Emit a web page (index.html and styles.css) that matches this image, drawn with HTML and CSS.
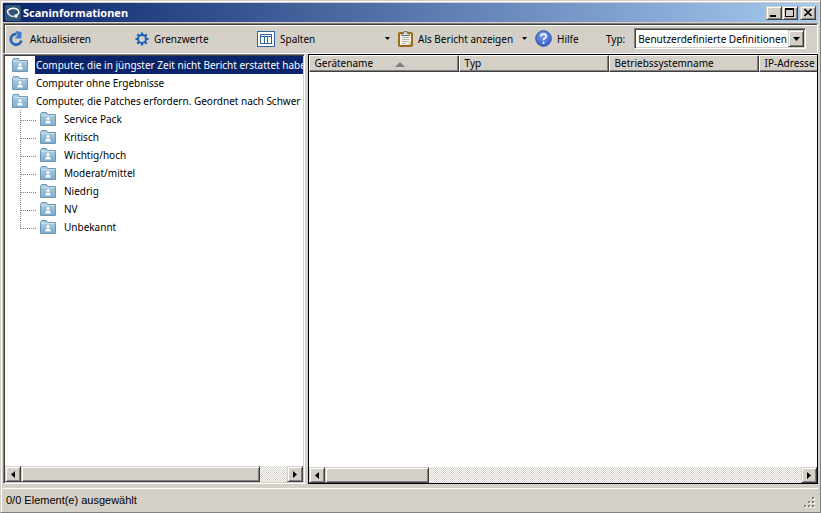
FILE: index.html
```
<!DOCTYPE html>
<html lang="de">
<head>
    <meta charset="UTF-8">
    <meta name="viewport" content="width=device-width, initial-scale=1.0">
    <title>Scaninformationen</title>
    <link rel="stylesheet" href="styles.css">
</head>
<body>
    <svg class="defs" width="0" height="0" aria-hidden="true">
        <defs>
            <linearGradient id="folderFill" x1="0" y1="0" x2="0" y2="1">
                <stop offset="0" stop-color="#b4d2e4"/>
                <stop offset="1" stop-color="#7dabca"/>
            </linearGradient>
            <radialGradient id="helpFill" cx="0.45" cy="0.3" r="0.75">
                <stop offset="0" stop-color="#7ea0ee"/>
                <stop offset="1" stop-color="#2f56c0"/>
            </radialGradient>
            <symbol id="folder" viewBox="0 0 16 14">
                <path d="M0.5 13.5V2.5L1.5 0.5H6.5L7.5 2.5H15.5V13.5Z" fill="url(#folderFill)" stroke="#6b98b5"/>
                <path d="M1 3.5H15" stroke="#c9e0ee"/>
                <circle cx="8" cy="6.5" r="1.6" fill="#fff"/>
                <path d="M5.5 11.5V10Q5.5 8.5 8 8.5T10.5 10V11.5Z" fill="#fff"/>
            </symbol>
            <symbol id="left" viewBox="0 0 4 7"><path d="M4 0V7L0 3.5Z"/></symbol>
            <symbol id="right" viewBox="0 0 4 7"><path d="M0 0V7L4 3.5Z"/></symbol>
            <symbol id="down" viewBox="0 0 7 4"><path d="M0 0H7L3.5 4Z"/></symbol>
        </defs>
    </svg>

    <div class="window">
        <header class="titlebar">
            <svg class="app-icon" width="16" height="16" viewBox="0 0 16 16">
                <rect width="16" height="16" rx="2" fill="#355673"/>
                <path d="M4 9Q0.500 6 5 4Q10 2 13 5Q15 8 12 10" fill="none" stroke="#fff" stroke-width="1.5"/>
                <path d="M2.500 7Q4 11.500 9 11.500" fill="none" stroke="#c5d8e6" stroke-width="1.5"/>
                <circle cx="11" cy="11" r="1.8" fill="#fff"/>
            </svg>
            <h1>Scaninformationen</h1>
            <div class="caption-buttons">
                <button type="button" class="raised" aria-label="Minimieren">
                    <svg width="10" height="9" viewBox="0 0 10 9"><path d="M1 7H7V9H1Z"/></svg>
                </button>
                <button type="button" class="raised" aria-label="Maximieren">
                    <svg width="10" height="9" viewBox="0 0 10 9"><path d="M0 0H9V9H0ZM1 2V8H8V2Z" fill-rule="evenodd"/></svg>
                </button>
                <button type="button" class="raised close" aria-label="Schließen">
                    <svg width="10" height="9" viewBox="0 0 10 9"><path d="M1.500 1L8.500 8M8.500 1L1.500 8" stroke="#000" stroke-width="1.700"/></svg>
                </button>
            </div>
        </header>

        <div class="toolbar">
            <button type="button" class="tool refresh">
                <svg width="16" height="16" viewBox="0 0 16 16">
                    <path d="M7.500 3A5.300 5.300 0 1 0 12.300 9.500" fill="none" stroke="#2867b5" stroke-width="2.800"/>
                    <path d="M6.500 0L12.500 1V7.500H5.500L8.500 4.500Z" fill="#3b7cc8"/>
                </svg>
                Aktualisieren
            </button>
            <button type="button" class="tool limits">
                <svg width="14" height="14" viewBox="0 0 14 14">
                    <circle cx="7" cy="7" r="4" fill="none" stroke="#1c62b5" stroke-width="2"/>
                    <path d="M7 0.500V3M7 11V13.500M0.500 7H3M11 7H13.500M2.300 2.300L4 4M10 10L11.700 11.700M11.700 2.300L10 4M4 10L2.300 11.700" stroke="#1c62b5" stroke-width="2.200"/>
                </svg>
                Grenzwerte
            </button>
            <button type="button" class="tool columns">
                <svg width="18" height="16" viewBox="0 0 18 16">
                    <rect x="0.500" y="0.500" width="17" height="15" fill="#fff" stroke="#31639c"/>
                    <path d="M3 5.500H15M3.500 3V13M7.500 5V13M10.500 5V13M14.500 3V13M3 12.500H15M3 3.500H15" stroke="#31639c" fill="none"/>
                </svg>
                Spalten
                <svg class="caret" width="5" height="3" viewBox="0 0 7 4"><use href="#down"/></svg>
            </button>
            <button type="button" class="tool report">
                <svg width="15" height="16" viewBox="0 0 15 16">
                    <rect x="1" y="2" width="13" height="13" rx="1" fill="#f8f5e8" stroke="#9b6c18" stroke-width="2"/>
                    <path d="M4 6.500H11M4 8.500H11M4 10.500H11M4 12.500H8" stroke="#b9b7ad"/>
                    <path d="M9 14L13 10V14Z" fill="#d1c9ac"/>
                    <path d="M3.500 4.500V2.500H5.500L6 0.500H9L9.500 2.500H11.500V4.500Z" fill="#d8d8d3" stroke="#77766f"/>
                </svg>
                Als Bericht anzeigen
                <svg class="caret" width="5" height="3" viewBox="0 0 7 4"><use href="#down"/></svg>
            </button>
            <button type="button" class="tool help">
                <svg width="17" height="17" viewBox="0 0 17 17">
                    <circle cx="8.500" cy="8.500" r="7.800" fill="url(#helpFill)" stroke="#3154ae"/>
                    <path d="M5.800 6.500Q6 4 8.600 4T11.200 6.300Q11.200 7.500 9.800 8.300T8.600 10.300" fill="none" stroke="#fff" stroke-width="1.600"/>
                    <circle cx="8.600" cy="12.800" r="1.100" fill="#fff"/>
                </svg>
                Hilfe
            </button>
            <label for="type">Typ:</label>
            <div class="combo">
                <select id="type">
                    <option>Benutzerdefinierte Definitionen</option>
                </select>
                <span class="combo-arrow raised"><svg width="7" height="4"><use href="#down"/></svg></span>
            </div>
        </div>

        <main class="panes">
            <nav class="tree-pane">
                <ul class="tree">
                    <li><div class="node selected"><svg width="16" height="14"><use href="#folder"/></svg><span>Computer, die in jüngster Zeit nicht Bericht erstattet habe</span></div></li>
                    <li><div class="node"><svg width="16" height="14"><use href="#folder"/></svg><span>Computer ohne Ergebnisse</span></div></li>
                    <li>
                        <div class="node"><svg width="16" height="14"><use href="#folder"/></svg><span>Computer, die Patches erfordern. Geordnet nach Schwer</span></div>
                        <ul class="branch">
                            <li class="node"><svg width="16" height="14"><use href="#folder"/></svg><span>Service Pack</span></li>
                            <li class="node"><svg width="16" height="14"><use href="#folder"/></svg><span>Kritisch</span></li>
                            <li class="node"><svg width="16" height="14"><use href="#folder"/></svg><span>Wichtig/hoch</span></li>
                            <li class="node"><svg width="16" height="14"><use href="#folder"/></svg><span>Moderat/mittel</span></li>
                            <li class="node"><svg width="16" height="14"><use href="#folder"/></svg><span>Niedrig</span></li>
                            <li class="node"><svg width="16" height="14"><use href="#folder"/></svg><span>NV</span></li>
                            <li class="node"><svg width="16" height="14"><use href="#folder"/></svg><span>Unbekannt</span></li>
                        </ul>
                    </li>
                </ul>
                <div class="scrollbar">
                    <button type="button" class="raised" aria-label="Nach links"><svg width="4" height="7"><use href="#left"/></svg></button>
                    <div class="track"><div class="thumb raised"></div></div>
                    <button type="button" class="raised" aria-label="Nach rechts"><svg width="4" height="7"><use href="#right"/></svg></button>
                </div>
            </nav>

            <section class="list-pane">
                <div class="list">
                    <table>
                        <thead>
                            <tr>
                                <th>Gerätename<svg class="sort" width="10" height="5" viewBox="0 0 10 5"><path d="M0 5L5 0L10 5Z" fill="#808080"/></svg></th>
                                <th>Typ</th>
                                <th>Betriebssystemname</th>
                                <th>IP-Adresse</th>
                            </tr>
                        </thead>
                    </table>
                </div>
                <div class="scrollbar">
                    <button type="button" class="raised" aria-label="Nach links"><svg width="4" height="7"><use href="#left"/></svg></button>
                    <div class="track"><div class="thumb raised"></div></div>
                    <button type="button" class="raised" aria-label="Nach rechts"><svg width="4" height="7"><use href="#right"/></svg></button>
                </div>
            </section>
        </main>

        <footer class="statusbar">
            <span>0/0 Element(e) ausgewählt</span>
            <svg class="grip" width="11" height="11" viewBox="0 0 11 11">
                <path d="M9 1h2v2h-2zM5 5h2v2h-2zM9 5h2v2h-2zM1 9h2v2h-2zM5 9h2v2h-2zM9 9h2v2h-2z" fill="#fff"/>
                <path d="M8 0h2v2h-2zM4 4h2v2h-2zM8 4h2v2h-2zM0 8h2v2h-2zM4 8h2v2h-2zM8 8h2v2h-2z" fill="#808080"/>
            </svg>
        </footer>
    </div>
</body>
</html>
```
FILE: styles.css
```
* {
    box-sizing: border-box;
}

body {
    margin: 0;
    font-family: "Noto Sans", "Open Sans", sans-serif;
    font-size: 10px;
    line-height: 18px;
    color: #000;
}

svg {
    display: block;
    flex: none;
}

.defs {
    position: absolute;
}

button {
    padding: 0;
    font: inherit;
    color: inherit;
    background: none;
    border: none;
}

.window {
    display: flex;
    flex-direction: column;
    height: 100vh;
    padding: 2px 2px 0 2px;
    background-color: #d4d0c8;
    border: 1px solid #d4d0c8;
    border-right-color: #808080;
    border-bottom-color: #808080;
    box-shadow: inset 1px 1px #fff;
    overflow: hidden;
}

/* 3D edge shared by buttons and scroll thumbs */
.raised {
    display: flex;
    align-items: center;
    justify-content: center;
    background-color: #d4d0c8;
    border: 1px solid;
    border-color: #d4d0c8 #404040 #404040 #d4d0c8;
    box-shadow: inset 1px 1px #fff, inset -1px -1px #808080;
}

/* Title bar */
.titlebar {
    display: flex;
    align-items: center;
    flex: none;
    height: 19px;
    padding: 0 2px;
    background: linear-gradient(to right, #0a246a, #a6caf0);
}

.titlebar h1 {
    flex: 1;
    margin: 0 0 0 2px;
    font-size: 11px;
    font-weight: bold;
    color: #fff;
}

.caption-buttons {
    display: flex;
}

.caption-buttons button {
    width: 16px;
    height: 14px;
}

.caption-buttons .close {
    margin-left: 2px;
}

/* Toolbar */
.toolbar {
    display: flex;
    align-items: center;
    flex: none;
    height: 31px;
    margin-top: 1px;
    padding-left: 5px;
    border-top: 1px solid #808080;
    border-left: 1px solid #808080;
    border-right: 1px solid #fff;
    border-bottom: 1px solid #fff;
    box-shadow: inset 1px 1px #404040, inset 2px 2px #fff;
}

.tool {
    display: flex;
    align-items: center;
    flex: none;
    gap: 5px;
    padding-right: 8px;
    white-space: nowrap;
}

.refresh {
    width: 126px;
}

.limits {
    width: 122px;
}

.columns {
    width: 141px;
}

.report {
    width: 137px;
}

.help {
    width: 71px;
}

.caret {
    margin-left: auto;
}

.combo {
    display: flex;
    width: 172px;
    height: 21px;
    margin-left: 9px;
    background-color: #fff;
    border: 1px solid;
    border-color: #808080 #fff #fff #808080;
    box-shadow: inset 1px 1px #404040, inset -1px -1px #d4d0c8;
    padding: 1px;
}

.combo select {
    flex: 1;
    min-width: 0;
    padding: 0 0 0 2px;
    font: inherit;
    color: inherit;
    background: none;
    border: none;
    appearance: none;
}

.combo-arrow {
    width: 16px;
    pointer-events: none;
}

/* Panes */
.panes {
    display: flex;
    flex: 1;
    gap: 3px;
    min-height: 0;
}

.tree-pane,
.list-pane {
    display: flex;
    flex-direction: column;
    min-width: 0;
    background-color: #fff;
}

.tree-pane {
    flex: 0 0 37%;
    padding: 1px;
    border: 1px solid;
    border-color: #808080 #fff #fff #808080;
    box-shadow: inset 1px 1px #404040, inset -1px -1px #d4d0c8;
}

.list-pane {
    flex: 1;
    border: 1px solid #000;
}

.tree,
.branch {
    margin: 0;
    padding: 0;
    list-style: none;
}

.tree {
    flex: 1;
    min-height: 0;
    overflow: hidden;
}

.node {
    display: flex;
    align-items: center;
    height: 18px;
    padding-left: 7px;
    gap: 7px;
    white-space: nowrap;
}

.node span {
    flex: none;
    padding-left: 1px;
}

.selected span {
    flex: 1 0 auto;
    color: #fff;
    background-color: #0a246a;
}

.branch {
    padding-left: 15px;
}

/* dotted connector lines */
.branch .node {
    padding-left: 0;
}

.branch .node::before {
    content: "";
    align-self: flex-start;
    width: 15px;
    height: 10px;
    margin-right: -3px;
    border-left: 1px dotted #808080;
    border-bottom: 1px dotted #808080;
}

.branch .node:not(:last-child) {
    background: repeating-linear-gradient(#808080 0 1px, #fff 1px 2px) no-repeat;
    background-size: 1px 100%;
}

/* List header */
.list {
    flex: 1;
    min-height: 0;
    overflow: hidden;
}

table {
    width: 600px;
    table-layout: fixed;
    border-collapse: separate;
    border-spacing: 0;
}

th {
    height: 17px;
    padding: 0 5px;
    font-weight: normal;
    line-height: 15px;
    text-align: left;
    white-space: nowrap;
    background-color: #d4d0c8;
    border: 1px solid;
    border-color: #fff #404040 #404040 #fff;
    box-shadow: inset -1px -1px #808080;
}

.sort {
    display: inline-block;
    margin-left: 22px;
    vertical-align: middle;
}

/* Scrollbars */
.scrollbar {
    display: flex;
    flex: none;
    height: 16px;
}

.scrollbar button {
    flex: none;
    width: 16px;
}

.track {
    flex: 1;
    background: repeating-conic-gradient(#d4d0c8 0 25%, #fff 0 50%) 0 0 / 2px 2px;
}

.thumb {
    height: 100%;
}

.tree-pane .thumb {
    width: 90%;
}

.list-pane .thumb {
    width: 22%;
}

/* Status bar */
.statusbar {
    display: flex;
    justify-content: space-between;
    flex: none;
    height: 24px;
    margin-top: 4px;
    padding: 2px 3px 0;
    border-top: 1px solid #fff;
    font-family: "Liberation Sans", Arial, sans-serif;
    font-size: 11px;
}

.grip {
    align-self: flex-end;
    margin-bottom: 4px;
}
```
